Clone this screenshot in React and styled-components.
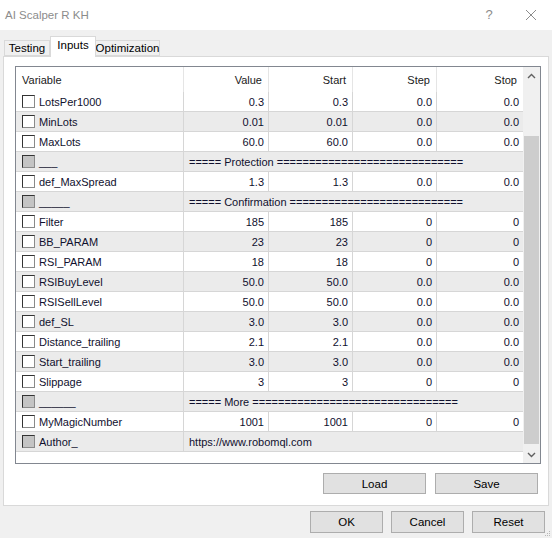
import React from 'react'
import styled, { createGlobalStyle } from 'styled-components'

const GlobalStyle = createGlobalStyle`
    html, body {
        margin:0;
        padding:0;
        background:#f0f0f0;
    }
    body {
        font-family:"Liberation Sans", Arial, sans-serif;
        font-size:11px;
    }
`

const rows = [
    { name: 'LotsPer1000', values: ['0.3', '0.3', '0.0', '0.0'] },
    { name: 'MinLots', values: ['0.01', '0.01', '0.0', '0.0'] },
    { name: 'MaxLots', values: ['60.0', '60.0', '0.0', '0.0'] },
    { name: '___', text: '===== Protection =============================' },
    { name: 'def_MaxSpread', values: ['1.3', '1.3', '0.0', '0.0'] },
    { name: '_____', text: '===== Confirmation ===========================' },
    { name: 'Filter', values: ['185', '185', '0', '0'] },
    { name: 'BB_PARAM', values: ['23', '23', '0', '0'] },
    { name: 'RSI_PARAM', values: ['18', '18', '0', '0'] },
    { name: 'RSIBuyLevel', values: ['50.0', '50.0', '0.0', '0.0'] },
    { name: 'RSISellLevel', values: ['50.0', '50.0', '0.0', '0.0'] },
    { name: 'def_SL', values: ['3.0', '3.0', '0.0', '0.0'] },
    { name: 'Distance_trailing', values: ['2.1', '2.1', '0.0', '0.0'] },
    { name: 'Start_trailing', values: ['3.0', '3.0', '0.0', '0.0'] },
    { name: 'Slippage', values: ['3', '3', '0', '0'] },
    { name: '______', text: '===== More ================================' },
    { name: 'MyMagicNumber', values: ['1001', '1001', '0', '0'] },
    { name: 'Author_', text: 'https://www.robomql.com' },
]

const headers = ['Value', 'Start', 'Step', 'Stop']

const App = () => {
    return (
        <>
            <GlobalStyle />
            <Window>
                <TitleBar>
                    <Title>AI Scalper R KH</Title>
                    <TitleButtons>
                        <HelpButton>?</HelpButton>
                        <CloseButton>
                            <svg width="12" height="12" viewBox="0 0 12 12">
                                <path d="M1 1 L11 11 M11 1 L1 11" stroke="#8c8c8c" strokeWidth="1" fill="none" />
                            </svg>
                        </CloseButton>
                    </TitleButtons>
                </TitleBar>
                <Body>
                    <TabStrip>
                        <Tab $w={46}>Testing</Tab>
                        <Tab $w={46} $active>Inputs</Tab>
                        <Tab $w={64}>Optimization</Tab>
                    </TabStrip>
                    <Panel>
                        <ListBox>
                            <ListMain>
                                <HeaderRow>
                                    <HeaderCell $left>Variable</HeaderCell>
                                    {headers.map((h) => (
                                        <HeaderCell key={h}>{h}</HeaderCell>
                                    ))}
                                </HeaderRow>
                                {rows.map((r, i) => (
                                    <Row key={r.name} $odd={i % 2 === 1}>
                                        <NameCell>
                                            <CheckBox $disabled={!!r.text} />
                                            <span>{r.name}</span>
                                        </NameCell>
                                        {r.text ? (
                                            <SpanCell>{r.text}</SpanCell>
                                        ) : (
                                            r.values.map((v, j) => (
                                                <ValueCell key={j} $last={j === 3}>{v}</ValueCell>
                                            ))
                                        )}
                                    </Row>
                                ))}
                            </ListMain>
                            <ScrollBar>
                                <ArrowButton>
                                    <svg width="9" height="6" viewBox="0 0 9 6">
                                        <path d="M1 5 L4.5 1.5 L8 5" stroke="#606060" strokeWidth="1.4" fill="none" />
                                    </svg>
                                </ArrowButton>
                                <Track>
                                    <Thumb />
                                </Track>
                                <ArrowButton>
                                    <svg width="9" height="6" viewBox="0 0 9 6">
                                        <path d="M1 1 L4.5 4.5 L8 1" stroke="#606060" strokeWidth="1.4" fill="none" />
                                    </svg>
                                </ArrowButton>
                            </ScrollBar>
                        </ListBox>
                        <PanelButtons>
                            <Button $w={103} $h={21}>Load</Button>
                            <Button $w={103} $h={21}>Save</Button>
                        </PanelButtons>
                    </Panel>
                    <DialogButtons>
                        <Button $w={73} $h={22}>OK</Button>
                        <Button $w={73} $h={22}>Cancel</Button>
                        <Button $w={73} $h={22}>Reset</Button>
                    </DialogButtons>
                </Body>
                <Grip>
                    <svg width="6" height="6" viewBox="0 0 6 6">
                        <rect x="4" y="0" width="1" height="1" fill="#b8b8b8" />
                        <rect x="2" y="2" width="1" height="1" fill="#b8b8b8" />
                        <rect x="4" y="2" width="1" height="1" fill="#b8b8b8" />
                        <rect x="0" y="4" width="1" height="1" fill="#b8b8b8" />
                        <rect x="2" y="4" width="1" height="1" fill="#b8b8b8" />
                        <rect x="4" y="4" width="1" height="1" fill="#b8b8b8" />
                    </svg>
                </Grip>
            </Window>
        </>
    )
}

export default App




const Window = styled.div`
    position:relative;
    width:552px;
    height:538px;
    background:#f0f0f0;
    overflow:hidden;
    display:flex;
    flex-direction:column;
`

const TitleBar = styled.div`
    height:30px;
    background:#fff;
    display:flex;
    align-items:center;
    justify-content:space-between;
    padding:0 0 1px 5px;
    box-sizing:border-box;
`

const Title = styled.div`
    font-size:11.5px;
    color:#8c8c8c;
`

const TitleButtons = styled.div`
    display:flex;
    align-items:center;
`

const HelpButton = styled.div`
    width:46px;
    text-align:center;
    font-size:13px;
    color:#8c8c8c;
    margin-right:-4px;
`

const CloseButton = styled.div`
    width:46px;
    height:29px;
    display:flex;
    align-items:center;
    justify-content:center;
    margin-right:-2px;
`

const Body = styled.div`
    flex:1;
    display:flex;
    flex-direction:column;
    padding:6px 3px 0 3px;
`

const TabStrip = styled.div`
    height:20px;
    display:flex;
    align-items:flex-end;
    padding-left:1px;
`

const Tab = styled.div`
    position:relative;
    width:${p => p.$w}px;
    height:${p => p.$active ? 21 : 16}px;
    box-sizing:border-box;
    border:1px solid #d9d9d9;
    border-bottom:${p => p.$active ? 'none' : '1px solid #d9d9d9'};
    border-left:${p => p.$active ? '1px solid #d9d9d9' : 'none'};
    background:${p => p.$active ? '#fff' : '#f0f0f0'};
    margin-bottom:${p => p.$active ? -1 : 0}px;
    z-index:${p => p.$active ? 2 : 1};
    display:flex;
    align-items:${p => p.$active ? 'flex-start' : 'center'};
    padding-top:${p => p.$active ? 2 : 0}px;
    justify-content:center;
    font-size:11.5px;
    color:#000;
    &:first-child{
        border-left:1px solid #d9d9d9;
    }
`

const Panel = styled.div`
    width:546px;
    height:450px;
    box-sizing:border-box;
    border:1px solid #d9d9d9;
    background:#fff;
    padding:9px 10px 0 11px;
    display:flex;
    flex-direction:column;
`

const ListBox = styled.div`
    width:526px;
    height:398px;
    box-sizing:border-box;
    border:1px solid #828790;
    display:flex;
`

const ListMain = styled.div`
    width:507px;
    display:flex;
    flex-direction:column;
`

const HeaderRow = styled.div`
    display:grid;
    grid-template-columns:168px 85px 84px 84px 86px;
    height:25px;
    color:#1a1a1a;
`

const HeaderCell = styled.div`
    display:flex;
    align-items:center;
    justify-content:${p => p.$left ? 'flex-start' : 'flex-end'};
    padding:${p => p.$left ? '0 0 0 6px' : '0 6px 0 0'};
    border-right:1px solid #e5e5e5;
    &:last-child{
        border-right:none;
    }
`

const Row = styled.div`
    display:grid;
    grid-template-columns:168px 85px 84px 84px 86px;
    height:20px;
    box-sizing:border-box;
    border-bottom:1px solid #d6d6d6;
    background:${p => p.$odd ? '#ebebeb' : '#fff'};
    color:#10102e;
`

const NameCell = styled.div`
    display:flex;
    align-items:center;
    gap:4px;
    padding-left:6px;
    border-right:1px solid #d6d6d6;
    white-space:nowrap;
`

const CheckBox = styled.div`
    width:13px;
    height:13px;
    box-sizing:border-box;
    border:1px solid;
    border-color:#333 #8a8a8a #8a8a8a #333;
    background:${p => p.$disabled ? '#c4c4c4' : '#fff'};
    flex-shrink:0;
`

const ValueCell = styled.div`
    display:flex;
    align-items:center;
    justify-content:flex-end;
    padding-right:4px;
    border-right:${p => p.$last ? 'none' : '1px solid #d6d6d6'};
`

const SpanCell = styled.div`
    grid-column:2 / -1;
    display:flex;
    align-items:center;
    padding-left:5px;
    white-space:nowrap;
    overflow:hidden;
`

const ScrollBar = styled.div`
    width:17px;
    background:#f0f0f0;
    display:flex;
    flex-direction:column;
`

const ArrowButton = styled.div`
    height:17px;
    display:flex;
    align-items:center;
    justify-content:center;
`

const Track = styled.div`
    flex:1;
    display:flex;
    flex-direction:column;
`

const Thumb = styled.div`
    margin:52px 1px 0 1px;
    height:308px;
    background:#cdcdcd;
`

const PanelButtons = styled.div`
    display:flex;
    justify-content:flex-end;
    gap:9px;
    margin-top:9px;
`

const Button = styled.div`
    width:${p => p.$w}px;
    height:${p => p.$h}px;
    box-sizing:border-box;
    border:1px solid #adadad;
    background:#e1e1e1;
    display:flex;
    align-items:center;
    justify-content:center;
    font-size:11.5px;
    color:#000;
`

const DialogButtons = styled.div`
    display:flex;
    justify-content:flex-end;
    gap:8px;
    margin-top:5px;
    padding-right:4px;
`

const Grip = styled.div`
    position:absolute;
    right:1px;
    bottom:1px;
    width:6px;
    height:6px;
    display:flex;
`
